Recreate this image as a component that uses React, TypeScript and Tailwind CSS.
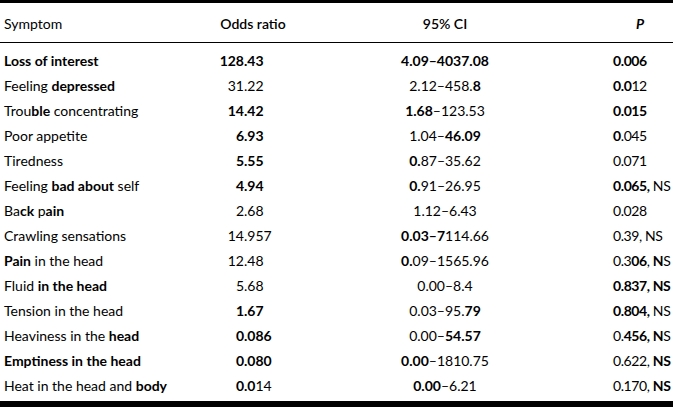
import React from "react"

// "*" toggles bold — mirrors the uneven weight in the source scan
type Row = { symptom: string; odds: string; ci: string; p: string }

const rows: Row[] = [
  { symptom: "*Loss of interest*", odds: "*128.43*", ci: "*4.09–4037.08*", p: "*0.006*" },
  { symptom: "Feeling *depressed*", odds: "31.22", ci: "2.12–458.*8*", p: "*0.0*12" },
  { symptom: "Trou*ble* concentrating", odds: "*14.42*", ci: "*1.68*–123.53", p: "*0.015*" },
  { symptom: "Poor appetite", odds: "*6.93*", ci: "1.04–*46.09*", p: "*0*.045" },
  { symptom: "Tiredness", odds: "*5.55*", ci: "*0.*87–35.62", p: "0.071" },
  { symptom: "Feeling *bad about* self", odds: "*4.94*", ci: "*0.*91–26.95", p: "*0.065,* NS" },
  { symptom: "Ba*ck* p*ain*", odds: "2.68", ci: "1.12–6.43", p: "0.028" },
  { symptom: "Crawling sensations", odds: "14.957", ci: "*0.03–7*114.66", p: "0.39, NS" },
  { symptom: "*Pain* in the head", odds: "12.48", ci: "*0.*09–1565.96", p: "0.3*06*, *N*S" },
  { symptom: "Fluid *in the head*", odds: "5.68", ci: "0.00–8.4", p: "*0.837, NS*" },
  { symptom: "Tension in the head", odds: "*1.67*", ci: "0.03–95.*79*", p: "*0.804,* NS" },
  { symptom: "Heaviness in the *head*", odds: "*0.086*", ci: "0.00–*54.57*", p: "0.*456,* *N*S" },
  { symptom: "*Emptiness in the head*", odds: "*0.080*", ci: "*0.00*–1810.75", p: "0.622, *NS*" },
  { symptom: "Heat in the head and *body*", odds: "*0.0*14", ci: "*0.00*–6.21", p: "0.170, *NS*" },
]

function Marked({ text }: { text: string }) {
  const parts = text.split("*")
  return (
    <>
      {parts.map((part, i) =>
        i % 2 === 1 ? (
          <span key={i} className="font-bold">
            {part}
          </span>
        ) : (
          <span key={i}>{part}</span>
        ),
      )}
    </>
  )
}

// keep the decimal point of every odds ratio on the same vertical line
function Decimal({ text }: { text: string }) {
  const plain = text.replace(/\*/g, "")
  const dot = plain.indexOf(".")
  // walk the marked string to split it at the decimal point
  let seen = 0
  let cut = text.length
  for (let i = 0; i < text.length; i++) {
    if (text[i] === "*") continue
    if (seen === dot) {
      cut = i
      break
    }
    seen++
  }
  const left = text.slice(0, cut)
  const right = text.slice(cut)
  const open = (left.match(/\*/g) || []).length % 2 === 1
  return (
    <div className="flex">
      <span className="w-[44px] text-right">
        <Marked text={open ? left + "*" : left} />
      </span>
      <span>
        <Marked text={open ? "*" + right : right} />
      </span>
    </div>
  )
}

export default function App() {
  return (
    <div
      className="w-[673px] h-[408px] bg-white text-black text-[14px] leading-[25px]"
      style={{ fontFamily: "Lato, 'Open Sans', sans-serif" }}
    >
      <div className="h-[3px] bg-black" />
      <div className="grid grid-cols-[200px_106px_278px_89px] mt-[8px] mb-[6px]">
        <div className="pl-[4px]">Symptom</div>
        <div className="text-center font-semibold">Odds ratio</div>
        <div className="text-center font-semibold">95% CI</div>
        <div className="pl-[52px] font-bold italic">P</div>
      </div>
      <div className="h-px bg-black" />
      <div className="pt-[5px] pb-[3px]">
        {rows.map((r) => (
          <div key={r.symptom} className="grid grid-cols-[200px_106px_278px_89px] h-[25px]">
            <div className="pl-[4px] whitespace-nowrap">
              <Marked text={r.symptom} />
            </div>
            <Decimal text={r.odds} />
            <div className="text-center whitespace-nowrap">
              <Marked text={r.ci} />
            </div>
            <div className="pl-[29px] whitespace-nowrap tracking-[-0.4px]">
              <Marked text={r.p} />
            </div>
          </div>
        ))}
      </div>
      <div className="h-[6px] bg-black" />
    </div>
  )
}
